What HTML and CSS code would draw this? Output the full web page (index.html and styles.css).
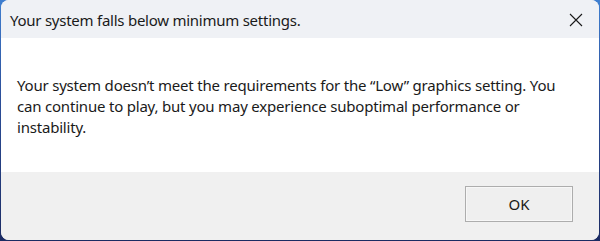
FILE: index.html
```html
<!DOCTYPE html>
<html>
<head>
<meta charset="utf-8">
<link rel="stylesheet" href="styles.css">
</head>
<body>
<div class="window">
  <div class="titlebar">
    <span class="title">Your system falls below minimum settings.</span>
    <span class="close" aria-label="Close">
      <svg width="14" height="14" viewBox="0 0 14 14"><path d="M1 1 L13 13 M13 1 L1 13" stroke="#1a1a1a" stroke-width="1.1" fill="none"/></svg>
    </span>
  </div>
  <div class="content">
    <p class="message">Your system doesn’t meet the requirements for the “Low” graphics setting. You can continue to play, but you may experience suboptimal performance or instability.</p>
  </div>
  <div class="footer">
    <button class="ok">OK</button>
  </div>
</div>
</body>
</html>
```
FILE: styles.css
```css
html, body {
  margin: 0;
  padding: 0;
  width: 600px;
  height: 241px;
  overflow: hidden;
}
body {
  background: linear-gradient(180deg, #3f7fd0 0%, #2c4f9a 40%, #1b2b63 100%);
  font-family: "Noto Sans", "Open Sans", sans-serif;
  color: #1a1a1a;
  padding: 0 1px 1px 1px;
  box-sizing: border-box;
}
.window {
  height: 240px;
  border-radius: 8px;
  overflow: hidden;
  display: flex;
  flex-direction: column;
  background: #f0f0f0;
}
.titlebar {
  height: 38px;
  flex: none;
  background: #eff1f5;
  display: flex;
  align-items: center;
  justify-content: space-between;
  padding: 1px 16px 0 9px;
  box-sizing: border-box;
}
.title {
  font-size: 15px;
  letter-spacing: -0.25px;
  color: #1a1a1a;
}
.close {
  display: flex;
  width: 14px;
  height: 14px;
}
.content {
  height: 134px;
  flex: none;
  background: #ffffff;
  padding: 0 16px;
  box-sizing: border-box;
}
.message {
  margin: 0;
  padding-top: 37px;
  font-size: 15px;
  letter-spacing: -0.2px;
  line-height: 21px;
  width: 545px;
}
.footer {
  flex: 1;
  background: #f0f0f0;
  display: flex;
  justify-content: flex-end;
  align-items: flex-start;
  padding: 14px 26px 0 0;
}
.ok {
  width: 108px;
  height: 36px;
  background: #efefef;
  border: 1px solid #adadad;
  box-shadow: inset 0 0 0 1px #f7f7f7;
  font-family: "Noto Sans", "Open Sans", sans-serif;
  font-size: 15px;
  color: #1a1a1a;
  padding: 0;
}
```
